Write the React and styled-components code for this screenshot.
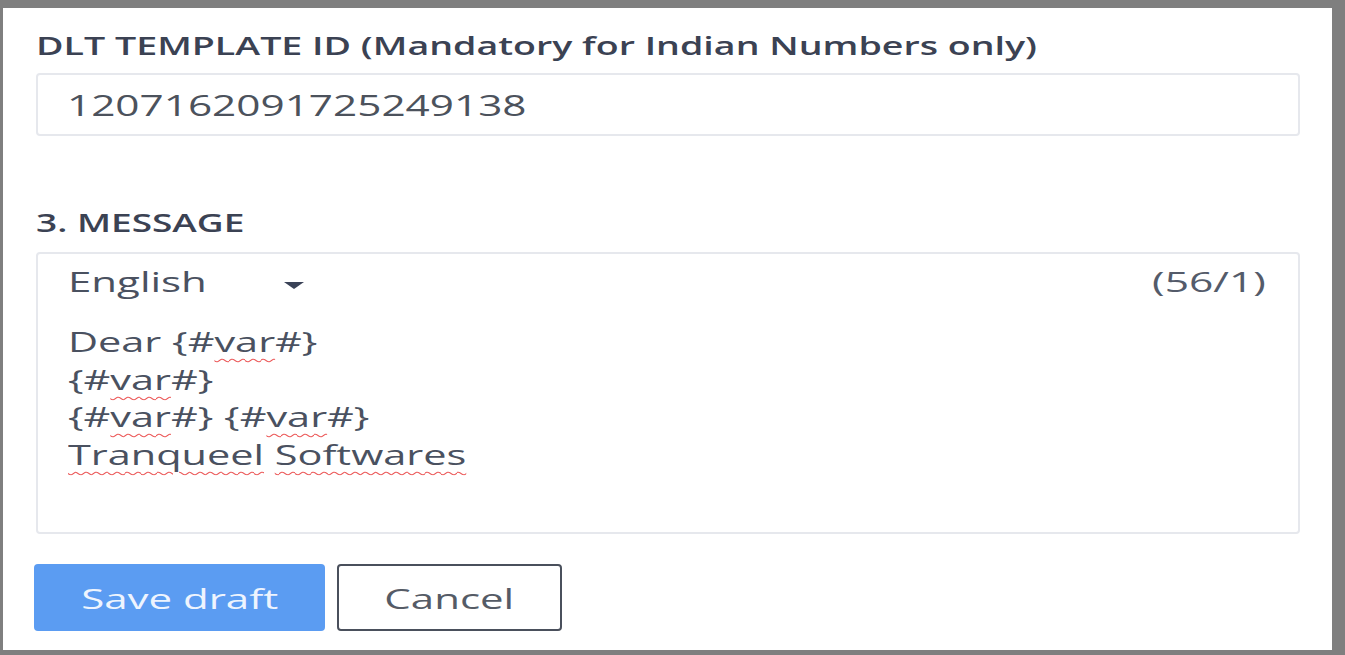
import React from "react";
import styled, { createGlobalStyle } from "styled-components";

const GlobalStyle = createGlobalStyle`
  html, body {
    margin: 0;
    padding: 0;
    background: #7f7f7f;
  }
  body {
    font-family: "Open Sans", "Liberation Sans", sans-serif;
  }
`;

// the captured UI is horizontally stretched, so glyphs get widened too
const Wide = styled.span`
  display: inline-block;
  white-space: pre;
  transform: scaleX(${(p) => p.$x || 1.5});
  transform-origin: ${(p) => p.$origin || "left"} center;
`;

const Frame = styled.div`
  height: 655px;
  box-sizing: border-box;
  padding: 8px 13px 5px 3px;
`;

const Panel = styled.div`
  height: 100%;
  box-sizing: border-box;
  background: #ffffff;
  padding: 22px 32px 0 33px;
  display: flex;
  flex-direction: column;
`;

const Label = styled.div`
  font-size: 25px;
  font-weight: 600;
  line-height: 30px;
  color: #3b4253;
  margin-top: ${(p) => p.$top || "0"};
`;

const TextField = styled.div`
  margin-top: 13px;
  height: 63px;
  box-sizing: border-box;
  border: 2px solid #e6e8ed;
  border-radius: 4px;
  padding: 0 29px;
  display: flex;
  align-items: center;
  font-size: 30px;
  color: #4c525c;
`;

const MessageBox = styled.div`
  margin-top: 15px;
  height: 282px;
  box-sizing: border-box;
  border: 2px solid #e6e8ed;
  border-radius: 4px;
  padding: 9px 32px 0 30px;
  font-size: 28px;
  color: #4a5160;
`;

const Header = styled.div`
  display: flex;
  justify-content: space-between;
  align-items: center;
  line-height: 36px;
`;

const LangSelect = styled.div`
  display: flex;
  align-items: center;
  gap: 123px;
`;

const Caret = styled.span`
  width: 0;
  height: 0;
  margin-top: 9px;
  border-left: 10px solid transparent;
  border-right: 10px solid transparent;
  border-top: 7px solid #3a4257;
`;

const Counter = styled.span`
  color: #545b6a;
`;

const Body = styled.div`
  margin-top: 24px;
  line-height: 37.5px;
`;

const Line = styled.div`
  height: 37.5px;
`;

const Misspelled = styled.span`
  text-decoration: underline wavy #ec5a5a;
  text-decoration-thickness: 1px;
  text-underline-offset: 6px;
`;

const Actions = styled.div`
  margin-top: 30px;
  margin-left: -2px;
  display: flex;
  gap: 12px;
`;

const Button = styled.button`
  height: 67px;
  box-sizing: border-box;
  border-radius: 4px;
  font-family: "Open Sans", "Liberation Sans", sans-serif;
  font-size: 28px;
  padding: 0;
  cursor: pointer;
  width: ${(p) => p.$width};
  background: ${(p) => (p.$primary ? "#5b9cf2" : "#ffffff")};
  color: ${(p) => (p.$primary ? "#eef4fe" : "#555b66")};
  border: ${(p) => (p.$primary ? "none" : "2px solid #4a505c")};
`;

const Var = () => (
  <>
    {"{#"}
    <Misspelled>var</Misspelled>
    {"#}"}
  </>
);

const App = () => {
  return (
    <>
      <GlobalStyle />
      <Frame>
        <Panel>
          <Label>
            <Wide $x={1.503}>DLT TEMPLATE ID (Mandatory for Indian Numbers only)</Wide>
          </Label>
          <TextField>
            <Wide $x={1.41}>1207162091725249138</Wide>
          </TextField>
          <Label $top="71px">
            <Wide $x={1.48}>3. MESSAGE</Wide>
          </Label>
          <MessageBox>
            <Header>
              <LangSelect>
                <Wide $x={1.5}>English</Wide>
                <Caret />
              </LangSelect>
              <Counter>
                <Wide $x={1.52} $origin="right">(56/1)</Wide>
              </Counter>
            </Header>
            <Body>
              <Line>
                <Wide $x={1.48}>
                  Dear <Var />
                </Wide>
              </Line>
              <Line>
                <Wide $x={1.48}>
                  <Var />
                </Wide>
              </Line>
              <Line>
                <Wide $x={1.48}>
                  <Var /> <Var />
                </Wide>
              </Line>
              <Line>
                <Wide $x={1.48}>
                  <Misspelled>Tranqueel</Misspelled> <Misspelled>Softwares</Misspelled>
                </Wide>
              </Line>
            </Body>
          </MessageBox>
          <Actions>
            <Button $primary $width="291px">
              <Wide $origin="center">Save draft</Wide>
            </Button>
            <Button $width="225px">
              <Wide $origin="center">Cancel</Wide>
            </Button>
          </Actions>
        </Panel>
      </Frame>
    </>
  );
};

export default App;
